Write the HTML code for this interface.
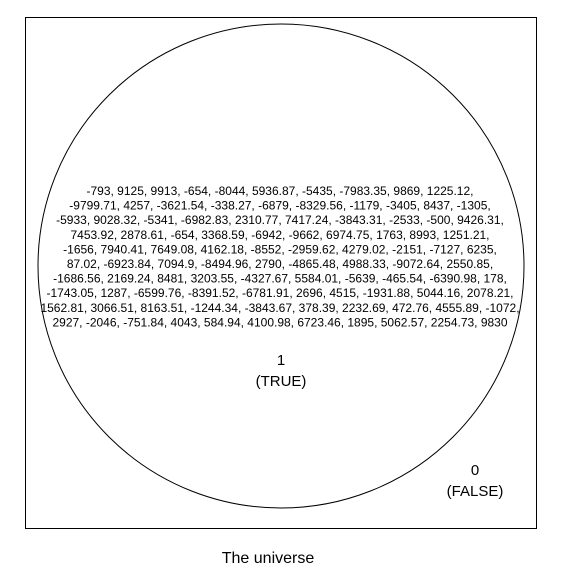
<!DOCTYPE html>
<html><head><style>html,body{margin:0;padding:0;background:#fff;}svg{display:block}</style></head>
<body>
<svg width="564" height="582" viewBox="0 0 564 582" xmlns="http://www.w3.org/2000/svg" font-family="Liberation Sans, sans-serif">
<rect x="25.5" y="17.5" width="511" height="511" fill="#fff" stroke="#000"/>
<ellipse cx="281" cy="266" rx="243" ry="242" fill="#fff" stroke="#000"/>
<g font-size="12" text-anchor="middle" fill="#000">
<text x="280" y="195">-793, 9125, 9913, -654, -8044, 5936.87, -5435, -7983.35, 9869, 1225.12,</text>
<text x="280" y="209.6">-9799.71, 4257, -3621.54, -338.27, -6879, -8329.56, -1179, -3405, 8437, -1305,</text>
<text x="280" y="224.2">-5933, 9028.32, -5341, -6982.83, 2310.77, 7417.24, -3843.31, -2533, -500, 9426.31,</text>
<text x="280" y="238.8">7453.92, 2878.61, -654, 3368.59, -6942, -9662, 6974.75, 1763, 8993, 1251.21,</text>
<text x="280" y="253.4">-1656, 7940.41, 7649.08, 4162.18, -8552, -2959.62, 4279.02, -2151, -7127, 6235,</text>
<text x="280" y="268">87.02, -6923.84, 7094.9, -8494.96, 2790, -4865.48, 4988.33, -9072.64, 2550.85,</text>
<text x="280" y="282.6">-1686.56, 2169.24, 8481, 3203.55, -4327.67, 5584.01, -5639, -465.54, -6390.98, 178,</text>
<text x="280" y="297.2">-1743.05, 1287, -6599.76, -8391.52, -6781.91, 2696, 4515, -1931.88, 5044.16, 2078.21,</text>
<text x="280" y="311.8">1562.81, 3066.51, 8163.51, -1244.34, -3843.67, 378.39, 2232.69, 472.76, 4555.89, -1072,</text>
<text x="280" y="326.4">2927, -2046, -751.84, 4043, 584.94, 4100.98, 6723.46, 1895, 5062.57, 2254.73, 9830</text>
</g>
<g font-size="15" text-anchor="middle" fill="#000">
<text x="281" y="365">1</text>
<text x="281" y="386">(TRUE)</text>
<text x="475" y="475">0</text>
<text x="475" y="496">(FALSE)</text>
</g>
<text x="268" y="563" font-size="16" text-anchor="middle">The universe</text>
</svg>
</body></html>
